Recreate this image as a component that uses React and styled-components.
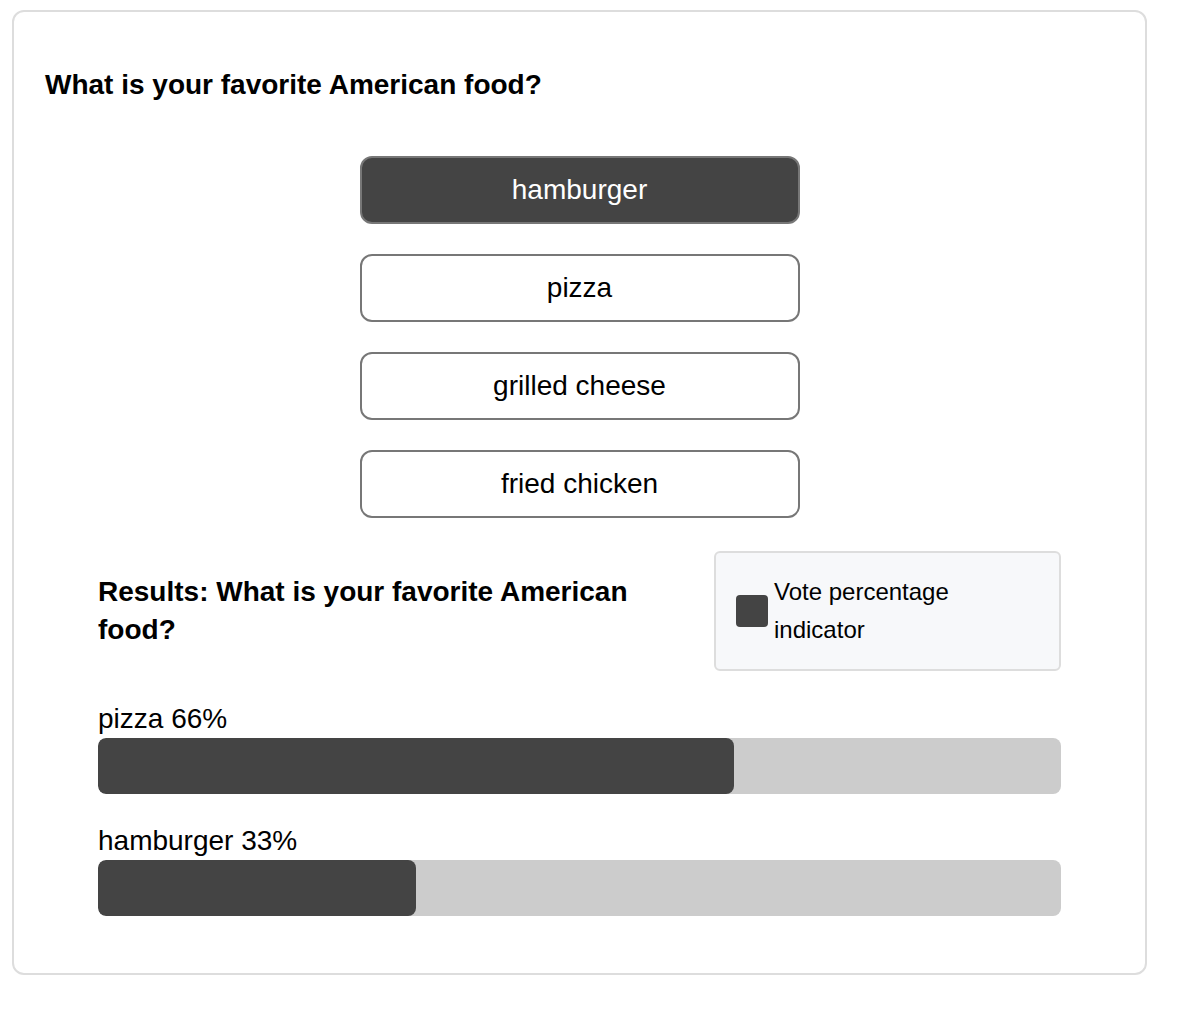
import React from "react";
import styled, { createGlobalStyle } from "styled-components";

const GlobalStyle = createGlobalStyle`
  body {
    margin: 0;
    background: #fff;
    font-family: "Liberation Sans", Arial, Helvetica, sans-serif;
    color: #000;
  }
`;

const options = ["hamburger", "pizza", "grilled cheese", "fried chicken"];
const results = [
  { name: "pizza", pct: 66 },
  { name: "hamburger", pct: 33 },
];

const Poll = () => {
  const selected = "hamburger";
  return (
    <Page>
      <GlobalStyle />
      <Card>
        <Question>What is your favorite American food?</Question>
        <Options>
          {options.map((opt) => (
            <Option key={opt} active={opt === selected}>
              {opt}
            </Option>
          ))}
        </Options>
        <Results>
          <ResultsHeader>
            <ResultsTitle>Results: What is your favorite American food?</ResultsTitle>
            <Legend>
              <Swatch />
              <LegendText>Vote percentage indicator</LegendText>
            </Legend>
          </ResultsHeader>
          <Bars>
            {results.map((r) => (
              <BarItem key={r.name}>
                <BarLabel>
                  {r.name} {r.pct}%
                </BarLabel>
                <Track>
                  <Fill style={{ width: `${r.pct}%` }} />
                </Track>
              </BarItem>
            ))}
          </Bars>
        </Results>
      </Card>
    </Page>
  );
};

const Page = styled.div`
  padding: 10px 0 0 12px;
`;

const Card = styled.div`
  width: 1135px;
  box-sizing: border-box;
  border: 2px solid #dddddd;
  border-radius: 12px;
  padding: 57px 31px 57px;
`;

const Question = styled.h2`
  margin: 0;
  font-size: 28px;
  line-height: 32px;
  font-weight: bold;
`;

const Options = styled.div`
  display: flex;
  flex-direction: column;
  align-items: center;
  gap: 30px;
  margin-top: 55px;
`;

const Option = styled.button.withConfig({
  shouldForwardProp: (p) => p !== "active",
})`
  width: 440px;
  height: 68px;
  box-sizing: border-box;
  border: 2px solid #777777;
  border-radius: 12px;
  background: ${(p) => (p.active ? "#444444" : "#ffffff")};
  color: ${(p) => (p.active ? "#ffffff" : "#000000")};
  font-family: inherit;
  font-size: 28px;
  cursor: pointer;
`;

const Results = styled.div`
  width: 963px;
  margin: 33px auto 0;
`;

const ResultsHeader = styled.div`
  display: flex;
  align-items: center;
  justify-content: space-between;
`;

const ResultsTitle = styled.h3`
  margin: 0;
  width: 556px;
  font-size: 28px;
  line-height: 38px;
  font-weight: bold;
`;

const Legend = styled.div`
  width: 347px;
  height: 120px;
  box-sizing: border-box;
  display: flex;
  align-items: center;
  gap: 6px;
  padding: 0 20px;
  background: #f7f8fa;
  border: 2px solid #dddddd;
  border-radius: 6px;
`;

const Swatch = styled.div`
  width: 32px;
  height: 32px;
  flex-shrink: 0;
  border-radius: 4px;
  background: #444444;
`;

const LegendText = styled.span`
  width: 200px;
  font-size: 24px;
  line-height: 38px;
`;

const Bars = styled.div`
  display: flex;
  flex-direction: column;
  gap: 31px;
  margin-top: 32px;
`;

const BarItem = styled.div``;

const BarLabel = styled.div`
  font-size: 28px;
  line-height: 32px;
  margin-bottom: 3px;
`;

const Track = styled.div`
  height: 56px;
  background: #cccccc;
  border-radius: 8px;
  overflow: hidden;
`;

const Fill = styled.div`
  height: 100%;
  background: #444444;
  border-radius: 8px;
`;

export default Poll;
